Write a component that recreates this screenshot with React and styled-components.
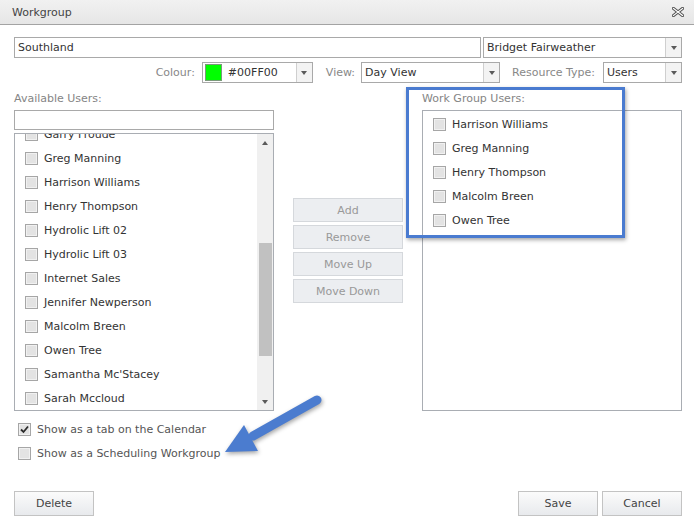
import React, { useLayoutEffect, useRef } from "react";
import styled, { createGlobalStyle } from "styled-components";

const GlobalStyle = createGlobalStyle`
  html, body { margin: 0; padding: 0; background: #fff; }
  body { font-family: "DejaVu Sans", Verdana, sans-serif; font-size: 11px; color: #333; }
  #root { width: 694px; height: 526px; position: relative; overflow: hidden; }
  * { box-sizing: border-box; }
`;

const Dialog = styled.div`
  width: 694px;
  height: 526px;
  position: relative;
  background: #fff;
`;

const TitleBar = styled.div`
  height: 25px;
  background: linear-gradient(#f1f1f1, #e6e6e6);
  border-bottom: 1px solid #a3a3a3;
  display: flex;
  align-items: center;
  justify-content: space-between;
  padding: 0 10px 0 12px;
`;

const Title = styled.span`
  color: #444;
  font-size: 11px;
`;

const Body = styled.div`
  padding: 12px 12px 0 14px;
`;

const Row = styled.div`
  display: flex;
  align-items: center;
  height: 21px;
  gap: ${(p) => p.$gap || 0}px;
  justify-content: ${(p) => (p.$end ? "flex-end" : "flex-start")};
  margin-top: ${(p) => p.$mt || 0}px;
`;

const TextBox = styled.div`
  width: ${(p) => p.$w}px;
  height: ${(p) => p.$h || 21}px;
  border: 1px solid #a9a9a9;
  padding-left: 3px;
  line-height: ${(p) => (p.$h || 21) - 2}px;
  color: #333;
  background: #fff;
  margin-top: ${(p) => p.$mt || 0}px;
`;

const SelectBox = styled.div`
  width: ${(p) => p.$w}px;
  height: 21px;
  border: 1px solid #a9a9a9;
  display: flex;
  align-items: stretch;
  background: #fff;
  flex: none;
`;

const SelectValue = styled.div`
  flex: 1;
  display: flex;
  align-items: center;
  gap: 6px;
  padding-left: ${(p) => (p.$swatch ? 2 : 3)}px;
  color: #333;
  white-space: nowrap;
  overflow: hidden;
`;

const Swatch = styled.span`
  width: 17px;
  height: 17px;
  background: #00ff00;
  border: 1px solid #7a9a7a;
`;

const ArrowBox = styled.div`
  width: 16px;
  border-left: 1px solid #cfcfcf;
  background: #f3f3f3;
  display: flex;
  align-items: center;
  justify-content: center;
`;

const Tri = styled.span`
  width: 0;
  height: 0;
  border-left: 3.5px solid transparent;
  border-right: 3.5px solid transparent;
  ${(p) => (p.$up ? "border-bottom" : "border-top")}: 4px solid #5a5a5a;
`;

const FieldLabel = styled.span`
  color: #888;
  margin: 0 ${(p) => p.$mr}px 0 ${(p) => p.$ml}px;
  white-space: nowrap;
`;

const Main = styled.div`
  display: flex;
  margin-top: 8px;
`;

const Column = styled.div`
  width: 260px;
  display: flex;
  flex-direction: column;
`;

const SectionLabel = styled.div`
  color: #858585;
  line-height: 15px;
  height: 15px;
`;

const ListBox = styled.div`
  height: ${(p) => p.$h}px;
  margin-top: ${(p) => p.$mt}px;
  border: 1px solid #a9adb3;
  display: flex;
  background: #fff;
`;

const Viewport = styled.div`
  flex: 1;
  overflow: hidden;
  padding-top: 1px;
`;

const Item = styled.div`
  height: 24px;
  display: flex;
  align-items: center;
  gap: 6px;
  padding-left: 10px;
  color: #333;
  white-space: nowrap;
`;

const Check = styled.span`
  width: 13px;
  height: 13px;
  flex: none;
  border: 1px solid #a6a6a6;
  background: #e3e3e3;
  box-shadow: inset 0 0 0 1px #f1f1f1;
  display: flex;
  align-items: center;
  justify-content: center;
`;

const Scrollbar = styled.div`
  width: 16px;
  background: #f0f0f0;
  display: flex;
  flex-direction: column;
`;

const ScrollArrow = styled.div`
  height: 17px;
  display: flex;
  align-items: center;
  justify-content: center;
`;

const Track = styled.div`
  flex: 1;
  padding: 0 1px 0 2px;
`;

const Thumb = styled.div`
  margin-top: ${(p) => p.$top}px;
  height: ${(p) => p.$h}px;
  background: #c1c1c1;
`;

const Middle = styled.div`
  width: 110px;
  margin: 0 19px;
  padding-top: 107px;
  display: flex;
  flex-direction: column;
  gap: 3px;
`;

const SideButton = styled.div`
  height: 24px;
  background: #eceef1;
  border: 1px solid #d5d8dc;
  color: #999;
  display: flex;
  align-items: center;
  justify-content: center;
`;

const Options = styled.div`
  margin-top: 6px;
  display: flex;
  flex-direction: column;
`;

const OptionRow = styled.div`
  height: 24px;
  display: flex;
  align-items: center;
  gap: 6px;
  padding-left: 4px;
  color: #555;
`;

const Footer = styled.div`
  margin-top: 26px;
  display: flex;
  justify-content: space-between;
`;

const ButtonGroup = styled.div`
  display: flex;
  gap: 4px;
`;

const Button = styled.div`
  width: ${(p) => p.$w}px;
  height: 25px;
  background: linear-gradient(#fbfbfb, #e8eaed);
  border: 1px solid #c3c3c3;
  color: #444;
  display: flex;
  align-items: center;
  justify-content: center;
`;

const Highlight = styled.div`
  position: absolute;
  left: 406px;
  top: 87px;
  width: 219px;
  height: 151px;
  border: 3px solid #4a7bd0;
  box-shadow: 1px 2px 4px rgba(0, 0, 0, 0.35);
  pointer-events: none;
`;

const Pointer = styled.svg`
  position: absolute;
  left: 215px;
  top: 390px;
  overflow: visible;
  filter: drop-shadow(1px 2px 2px rgba(0, 0, 0, 0.35));
`;

const CheckBox = ({ checked }) => (
  <Check>
    {checked && (
      <svg width="9" height="9" viewBox="0 0 9 9">
        <path d="M1 4.5 L3.5 7 L8 1.5" fill="none" stroke="#2b2b2b" strokeWidth="1.8" />
      </svg>
    )}
  </Check>
);

const Select = ({ w, children, swatch }) => (
  <SelectBox $w={w}>
    <SelectValue $swatch={swatch}>
      {swatch && <Swatch />}
      {children}
    </SelectValue>
    <ArrowBox>
      <Tri />
    </ArrowBox>
  </SelectBox>
);

const CloseIcon = () => (
  <svg width="12" height="10" viewBox="0 0 12 10">
    <path d="M1.5 1.5 L10.5 8.5 M10.5 1.5 L1.5 8.5" stroke="#555" strokeWidth="3.2" strokeLinecap="square" />
    <path d="M1.5 1.5 L10.5 8.5 M10.5 1.5 L1.5 8.5" stroke="#fff" strokeWidth="1.2" strokeLinecap="square" />
  </svg>
);

const available = [
  "Garry Froude",
  "Greg Manning",
  "Harrison Williams",
  "Henry Thompson",
  "Hydrolic Lift 02",
  "Hydrolic Lift 03",
  "Internet Sales",
  "Jennifer Newperson",
  "Malcolm Breen",
  "Owen Tree",
  "Samantha Mc'Stacey",
  "Sarah Mccloud",
];

const groupUsers = ["Harrison Williams", "Greg Manning", "Henry Thompson", "Malcolm Breen", "Owen Tree"];

export default function App() {
  const vp = useRef(null);
  useLayoutEffect(() => {
    if (vp.current) vp.current.scrollTop = 13;
  }, []);

  return (
    <Dialog>
      <GlobalStyle />
      <TitleBar>
        <Title>Workgroup</Title>
        <CloseIcon />
      </TitleBar>
      <Body>
        <Row $gap={2}>
          <TextBox $w={467}>Southland</TextBox>
          <Select w={199}>Bridget Fairweather</Select>
        </Row>
        <Row $end $mt={4}>
          <FieldLabel $ml={0} $mr={7}>Colour:</FieldLabel>
          <Select w={111} swatch>#00FF00</Select>
          <FieldLabel $ml={13} $mr={6}>View:</FieldLabel>
          <Select w={139}>Day View</Select>
          <FieldLabel $ml={12} $mr={8}>Resource Type:</FieldLabel>
          <Select w={79}>Users</Select>
        </Row>
        <Main>
          <Column>
            <SectionLabel>Available Users:</SectionLabel>
            <TextBox $w={260} $h={20} $mt={4} />
            <ListBox $h={278} $mt={3}>
              <Viewport ref={vp}>
                {available.map((n) => (
                  <Item key={n}>
                    <CheckBox />
                    {n}
                  </Item>
                ))}
              </Viewport>
              <Scrollbar>
                <ScrollArrow>
                  <Tri $up />
                </ScrollArrow>
                <Track>
                  <Thumb $top={92} $h={113} />
                </Track>
                <ScrollArrow>
                  <Tri />
                </ScrollArrow>
              </Scrollbar>
            </ListBox>
          </Column>
          <Middle>
            <SideButton>Add</SideButton>
            <SideButton>Remove</SideButton>
            <SideButton>Move Up</SideButton>
            <SideButton>Move Down</SideButton>
          </Middle>
          <Column>
            <SectionLabel>Work Group Users:</SectionLabel>
            <ListBox $h={301} $mt={4}>
              <Viewport>
                {groupUsers.map((n) => (
                  <Item key={n}>
                    <CheckBox />
                    {n}
                  </Item>
                ))}
              </Viewport>
            </ListBox>
          </Column>
        </Main>
        <Options>
          <OptionRow>
            <CheckBox checked />
            Show as a tab on the Calendar
          </OptionRow>
          <OptionRow>
            <CheckBox />
            Show as a Scheduling Workgroup
          </OptionRow>
        </Options>
        <Footer>
          <Button $w={80}>Delete</Button>
          <ButtonGroup>
            <Button $w={80}>Save</Button>
            <Button $w={80}>Cancel</Button>
          </ButtonGroup>
        </Footer>
      </Body>
      <Highlight />
      <Pointer width="115" height="75" viewBox="0 0 115 75">
        <line x1="102" y1="10" x2="38" y2="46" stroke="#4b7ccf" strokeWidth="9" strokeLinecap="round" />
        <polygon points="10,62 29,35 43,61" fill="#4b7ccf" />
      </Pointer>
    </Dialog>
  );
}
